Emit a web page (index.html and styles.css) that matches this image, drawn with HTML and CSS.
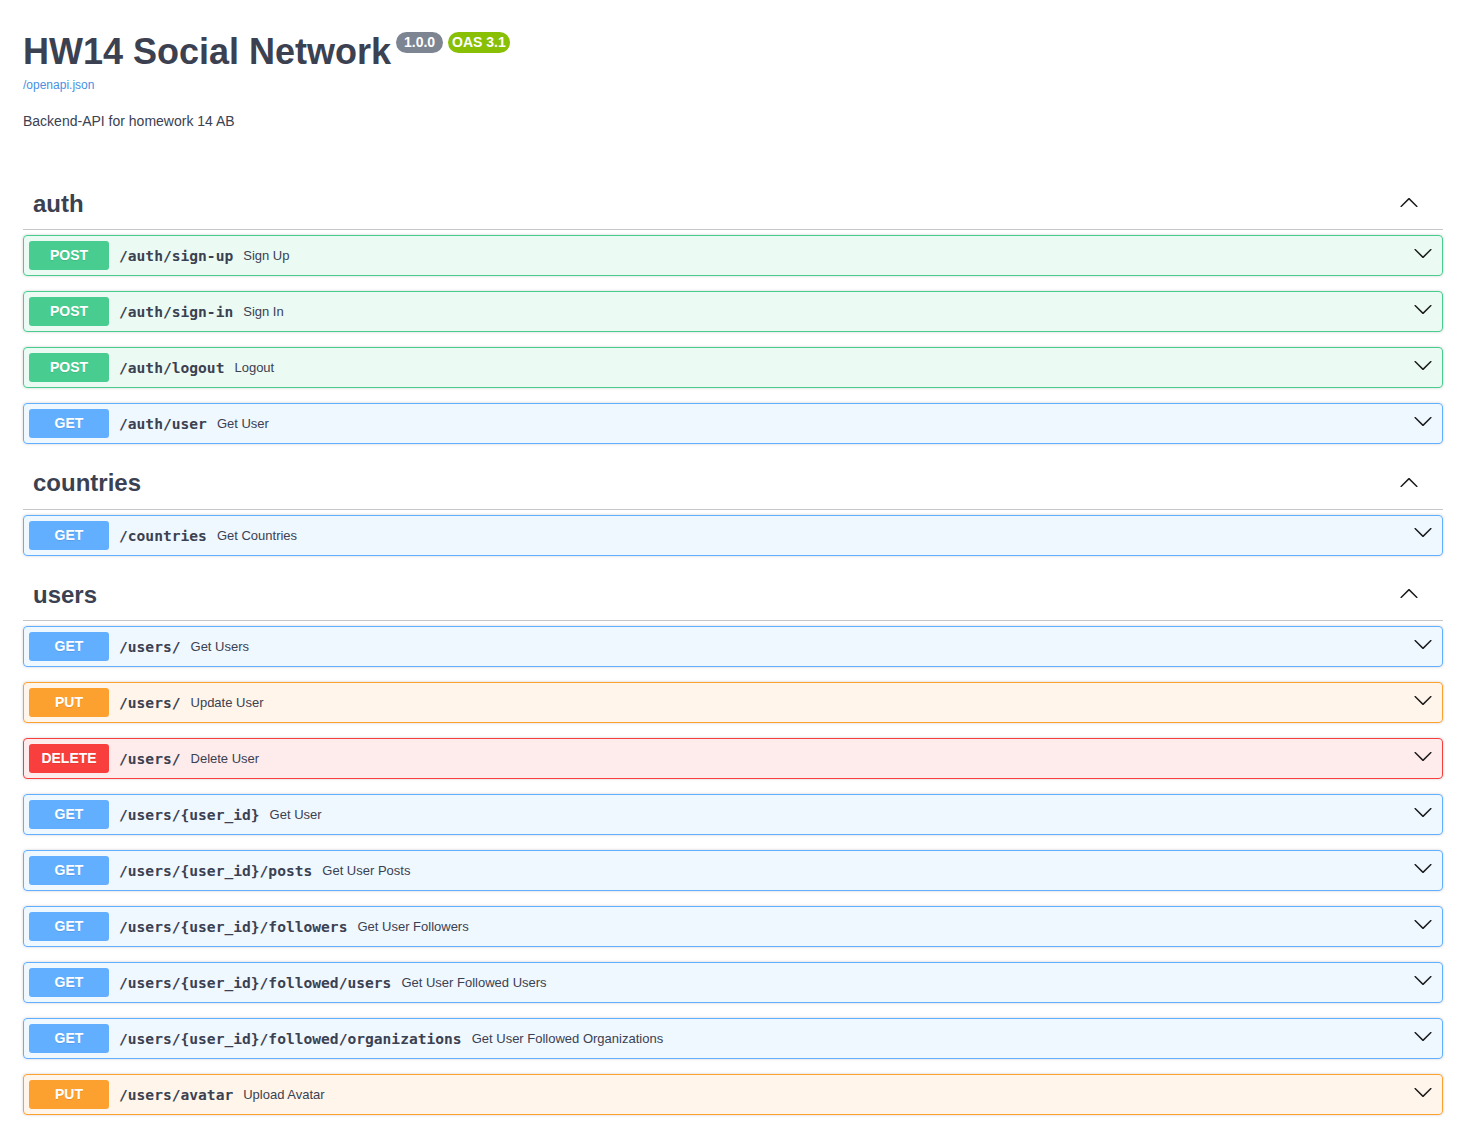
FILE: index.html
```html
<!DOCTYPE html>
<html lang="en">
<head>
<meta charset="utf-8">
<title>HW14 Social Network - Swagger UI</title>
<link rel="stylesheet" href="styles.css">
</head>
<body>
<div class="wrapper">
  <div class="info">
    <h2 class="title">
      <span class="title-text">HW14 Social Network</span>
      <small class="stamp version"><pre> 1.0.0 </pre></small>
      <small class="stamp oas"><pre>OAS 3.1</pre></small>
    </h2>
    <a class="link" href="#">/openapi.json</a>
    <p class="description">Backend-API for homework 14 AB</p>
  </div>

  <section class="tag-section">
    <h3 class="tag"><span class="tag-name">auth</span>
      <svg class="tag-arrow" width="20" height="20" viewBox="0 0 20 20"><path d="M17.418 14.908c.272.268.709.268.979 0s.271-.701 0-.969l-7.908-7.83c-.27-.268-.707-.268-.979 0l-7.908 7.83c-.27.268-.27.701 0 .969.271.268.709.268.979 0L10 7.767l7.418 7.141z"/></svg>
    </h3>
    <div class="op post"><span class="method">POST</span><span class="path">/auth/sign-up</span><span class="summary">Sign Up</span><svg class="arrow" width="20" height="20" viewBox="0 0 20 20"><path d="M17.418 6.109c.272-.268.709-.268.979 0s.271.701 0 .969l-7.908 7.83c-.27.268-.707.268-.979 0l-7.908-7.83c-.27-.268-.27-.701 0-.969.271-.268.709-.268.979 0L10 13.25l7.418-7.141z"/></svg></div>
    <div class="op post"><span class="method">POST</span><span class="path">/auth/sign-in</span><span class="summary">Sign In</span><svg class="arrow" width="20" height="20" viewBox="0 0 20 20"><path d="M17.418 6.109c.272-.268.709-.268.979 0s.271.701 0 .969l-7.908 7.83c-.27.268-.707.268-.979 0l-7.908-7.83c-.27-.268-.27-.701 0-.969.271-.268.709-.268.979 0L10 13.25l7.418-7.141z"/></svg></div>
    <div class="op post"><span class="method">POST</span><span class="path">/auth/logout</span><span class="summary">Logout</span><svg class="arrow" width="20" height="20" viewBox="0 0 20 20"><path d="M17.418 6.109c.272-.268.709-.268.979 0s.271.701 0 .969l-7.908 7.83c-.27.268-.707.268-.979 0l-7.908-7.83c-.27-.268-.27-.701 0-.969.271-.268.709-.268.979 0L10 13.25l7.418-7.141z"/></svg></div>
    <div class="op get"><span class="method">GET</span><span class="path">/auth/user</span><span class="summary">Get User</span><svg class="arrow" width="20" height="20" viewBox="0 0 20 20"><path d="M17.418 6.109c.272-.268.709-.268.979 0s.271.701 0 .969l-7.908 7.83c-.27.268-.707.268-.979 0l-7.908-7.83c-.27-.268-.27-.701 0-.969.271-.268.709-.268.979 0L10 13.25l7.418-7.141z"/></svg></div>
  </section>

  <section class="tag-section">
    <h3 class="tag"><span class="tag-name">countries</span>
      <svg class="tag-arrow" width="20" height="20" viewBox="0 0 20 20"><path d="M17.418 14.908c.272.268.709.268.979 0s.271-.701 0-.969l-7.908-7.83c-.27-.268-.707-.268-.979 0l-7.908 7.83c-.27.268-.27.701 0 .969.271.268.709.268.979 0L10 7.767l7.418 7.141z"/></svg>
    </h3>
    <div class="op get"><span class="method">GET</span><span class="path">/countries</span><span class="summary">Get Countries</span><svg class="arrow" width="20" height="20" viewBox="0 0 20 20"><path d="M17.418 6.109c.272-.268.709-.268.979 0s.271.701 0 .969l-7.908 7.83c-.27.268-.707.268-.979 0l-7.908-7.83c-.27-.268-.27-.701 0-.969.271-.268.709-.268.979 0L10 13.25l7.418-7.141z"/></svg></div>
  </section>

  <section class="tag-section">
    <h3 class="tag"><span class="tag-name">users</span>
      <svg class="tag-arrow" width="20" height="20" viewBox="0 0 20 20"><path d="M17.418 14.908c.272.268.709.268.979 0s.271-.701 0-.969l-7.908-7.83c-.27-.268-.707-.268-.979 0l-7.908 7.83c-.27.268-.27.701 0 .969.271.268.709.268.979 0L10 7.767l7.418 7.141z"/></svg>
    </h3>
    <div class="op get"><span class="method">GET</span><span class="path">/users/</span><span class="summary">Get Users</span><svg class="arrow" width="20" height="20" viewBox="0 0 20 20"><path d="M17.418 6.109c.272-.268.709-.268.979 0s.271.701 0 .969l-7.908 7.83c-.27.268-.707.268-.979 0l-7.908-7.83c-.27-.268-.27-.701 0-.969.271-.268.709-.268.979 0L10 13.25l7.418-7.141z"/></svg></div>
    <div class="op put"><span class="method">PUT</span><span class="path">/users/</span><span class="summary">Update User</span><svg class="arrow" width="20" height="20" viewBox="0 0 20 20"><path d="M17.418 6.109c.272-.268.709-.268.979 0s.271.701 0 .969l-7.908 7.83c-.27.268-.707.268-.979 0l-7.908-7.83c-.27-.268-.27-.701 0-.969.271-.268.709-.268.979 0L10 13.25l7.418-7.141z"/></svg></div>
    <div class="op delete"><span class="method">DELETE</span><span class="path">/users/</span><span class="summary">Delete User</span><svg class="arrow" width="20" height="20" viewBox="0 0 20 20"><path d="M17.418 6.109c.272-.268.709-.268.979 0s.271.701 0 .969l-7.908 7.83c-.27.268-.707.268-.979 0l-7.908-7.83c-.27-.268-.27-.701 0-.969.271-.268.709-.268.979 0L10 13.25l7.418-7.141z"/></svg></div>
    <div class="op get"><span class="method">GET</span><span class="path">/users/{user_id}</span><span class="summary">Get User</span><svg class="arrow" width="20" height="20" viewBox="0 0 20 20"><path d="M17.418 6.109c.272-.268.709-.268.979 0s.271.701 0 .969l-7.908 7.83c-.27.268-.707.268-.979 0l-7.908-7.83c-.27-.268-.27-.701 0-.969.271-.268.709-.268.979 0L10 13.25l7.418-7.141z"/></svg></div>
    <div class="op get"><span class="method">GET</span><span class="path">/users/{user_id}/posts</span><span class="summary">Get User Posts</span><svg class="arrow" width="20" height="20" viewBox="0 0 20 20"><path d="M17.418 6.109c.272-.268.709-.268.979 0s.271.701 0 .969l-7.908 7.83c-.27.268-.707.268-.979 0l-7.908-7.83c-.27-.268-.27-.701 0-.969.271-.268.709-.268.979 0L10 13.25l7.418-7.141z"/></svg></div>
    <div class="op get"><span class="method">GET</span><span class="path">/users/{user_id}/followers</span><span class="summary">Get User Followers</span><svg class="arrow" width="20" height="20" viewBox="0 0 20 20"><path d="M17.418 6.109c.272-.268.709-.268.979 0s.271.701 0 .969l-7.908 7.83c-.27.268-.707.268-.979 0l-7.908-7.83c-.27-.268-.27-.701 0-.969.271-.268.709-.268.979 0L10 13.25l7.418-7.141z"/></svg></div>
    <div class="op get"><span class="method">GET</span><span class="path">/users/{user_id}/followed/users</span><span class="summary">Get User Followed Users</span><svg class="arrow" width="20" height="20" viewBox="0 0 20 20"><path d="M17.418 6.109c.272-.268.709-.268.979 0s.271.701 0 .969l-7.908 7.83c-.27.268-.707.268-.979 0l-7.908-7.83c-.27-.268-.27-.701 0-.969.271-.268.709-.268.979 0L10 13.25l7.418-7.141z"/></svg></div>
    <div class="op get"><span class="method">GET</span><span class="path">/users/{user_id}/followed/organizations</span><span class="summary">Get User Followed Organizations</span><svg class="arrow" width="20" height="20" viewBox="0 0 20 20"><path d="M17.418 6.109c.272-.268.709-.268.979 0s.271.701 0 .969l-7.908 7.83c-.27.268-.707.268-.979 0l-7.908-7.83c-.27-.268-.27-.701 0-.969.271-.268.709-.268.979 0L10 13.25l7.418-7.141z"/></svg></div>
    <div class="op put"><span class="method">PUT</span><span class="path">/users/avatar</span><span class="summary">Upload Avatar</span><svg class="arrow" width="20" height="20" viewBox="0 0 20 20"><path d="M17.418 6.109c.272-.268.709-.268.979 0s.271.701 0 .969l-7.908 7.83c-.27.268-.707.268-.979 0l-7.908-7.83c-.27-.268-.27-.701 0-.969.271-.268.709-.268.979 0L10 13.25l7.418-7.141z"/></svg></div>
  </section>
</div>
</body>
</html>
```

FILE: styles.css
```css
html, body {
  margin: 0;
  padding: 0;
  background: #fff;
}

body {
  font-family: "Liberation Sans", Arial, sans-serif;
  color: #3b4151;
}

.wrapper {
  width: 1420px;
  margin: 0 0 0 23px;
  padding: 31px 0 0;
}

/* ---------- info ---------- */
.info {
  margin: 0 0 50.5px;
}

.title {
  display: flex;
  align-items: flex-start;
  margin: 0;
  font-size: 36px;
  line-height: 41px;
  font-weight: 700;
  color: #3b4151;
}

.stamp {
  display: inline-block;
  margin: 1px 0 0 5px;
  padding: 2px 4px;
  border-radius: 57px;
  background: #7d8492;
}

.stamp.oas {
  background: #89bf04;
}

.stamp pre {
  margin: 0;
  padding: 0;
  font-family: "Liberation Sans", Arial, sans-serif;
  font-size: 14px;
  line-height: 17px;
  font-weight: 700;
  color: #fff;
  white-space: pre;
}

.link {
  display: block;
  margin-top: 6px;
  font-size: 12px;
  line-height: 14px;
  color: #4990e2;
  text-decoration: none;
}

.description {
  margin: 21px 0 0;
  font-size: 14px;
  line-height: 16px;
  color: #3b4151;
}

/* ---------- tag sections ---------- */
.tag-section {
  display: flex;
  flex-direction: column;
}

.tag {
  display: flex;
  align-items: center;
  justify-content: space-between;
  height: 29.5px;
  margin: 0 0 5px;
  padding: 10px 20px 10px 10px;
  border-bottom: 1px solid rgba(59, 65, 81, 0.3);
  font-size: 24px;
  line-height: 27px;
  font-weight: 700;
  color: #3b4151;
}

.tag-name {
  margin-bottom: 2px;
}

.tag-arrow {
  fill: #1a1a1a;
  margin: 0 4px 4px 0;
}

/* ---------- operations ---------- */
.op {
  display: flex;
  align-items: center;
  margin: 0 0 15px;
  padding: 5px;
  border: 1px solid;
  border-radius: 4px;
  box-shadow: 0 0 3px rgba(0, 0, 0, 0.19);
}

.method {
  min-width: 80px;
  padding: 6px 0;
  border-radius: 3px;
  font-size: 14px;
  line-height: 17px;
  font-weight: 700;
  text-align: center;
  color: #fff;
  text-shadow: 0 1px 0 rgba(0, 0, 0, 0.1);
}

.path {
  padding: 0 10px;
  font-family: "DejaVu Sans Mono", "Liberation Mono", monospace;
  font-size: 14.6px;
  font-weight: 700;
  color: #3b4151;
}

.summary {
  flex: 1;
  font-size: 13px;
  color: #3b4151;
}

.arrow {
  fill: #1a1a1a;
  margin: 0 4px 6px 0;
}

.op.post {
  background: rgba(73, 204, 144, 0.1);
  border-color: #49cc90;
}
.op.post .method { background: #49cc90; }

.op.get {
  background: rgba(97, 175, 254, 0.1);
  border-color: #61affe;
}
.op.get .method { background: #61affe; }

.op.put {
  background: rgba(252, 161, 48, 0.1);
  border-color: #fca130;
}
.op.put .method { background: #fca130; }

.op.delete {
  background: rgba(249, 62, 62, 0.1);
  border-color: #f93e3e;
}
.op.delete .method { background: #f93e3e; }
```
